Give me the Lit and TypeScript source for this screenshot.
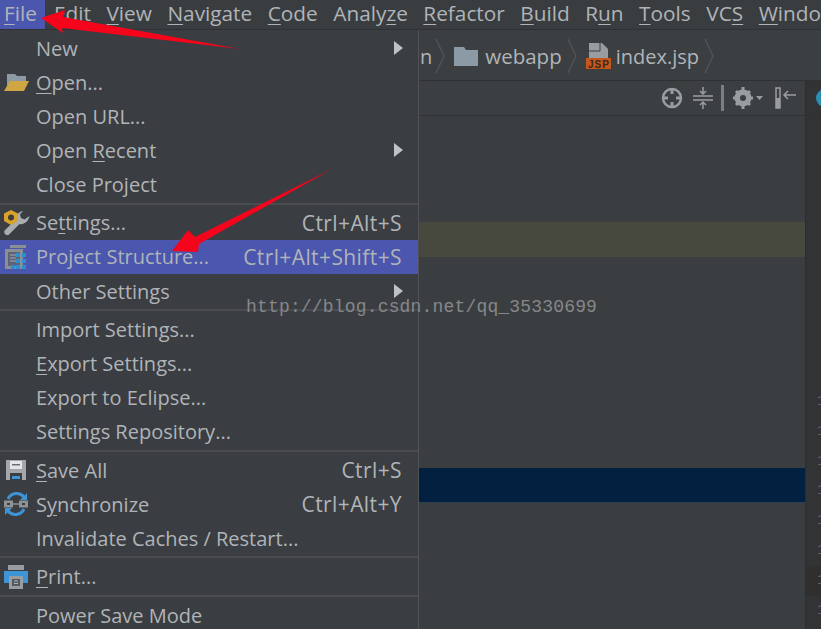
import { LitElement, html, css, svg } from "lit";
import { customElement } from "lit/decorators.js";

type Row = { t?: any; k?: string; sub?: boolean; hi?: boolean; ic?: any; sep?: boolean };

const folderOpen = html`<svg width="26" height="20" viewBox="0 0 26 20"><path d="M4 2h8l2 2h9v5H8l-4 8z" fill="#8c9aa6"/><path d="M7 9h19l-5 10H1z" fill="#d0a544"/></svg>`;
const wrench = html`<svg width="27" height="26" viewBox="0 0 27 26"><path d="M20 1c-4 .5-7 4-6.500 8L2 20c-2 2 0 6 3.500 5l11-11c4.500 1 9-2.500 10-8l-5 3.500-3.500-1.500-1-3.500z" fill="#a9acaf"/><path d="M8 0l7 3.500v7.500l-7 4-7-4V3.500z" fill="#d9a32b"/><circle cx="8" cy="7.500" r="3" fill="#3f3d36"/></svg>`;
const projIcon = html`<svg width="26" height="26" viewBox="0 0 26 26"><path d="M7 1h16v3H7zM2 5h18v20H2z" fill="#8b8f94"/><rect x="5" y="8" width="12" height="14" fill="#5f6377"/><path d="M7 11h6M7 14h6M7 17h6" stroke="#a3a6ad"/><g fill="#2d8fd0"><rect x="13" y="9" width="4" height="4"/><rect x="19" y="9" width="4" height="4"/><rect x="13" y="15" width="4" height="4"/><rect x="19" y="15" width="4" height="4"/><rect x="8" y="21" width="4" height="4"/><rect x="13" y="21" width="4" height="4"/><rect x="19" y="21" width="4" height="4"/></g></svg>`;
const save = html`<svg width="22" height="22" viewBox="0 0 22 22"><path d="M1 1h20v20H1z" fill="#a4a7aa"/><rect x="5" y="2" width="12" height="8" fill="#e4e5e6"/><rect x="7" y="5" width="8" height="1.500" fill="#6c6f72"/><rect x="5" y="14" width="12" height="7" fill="#3a3d41"/><rect x="7" y="17" width="8" height="3" fill="#3d94d6"/></svg>`;
const sync = html`<svg width="26" height="26" viewBox="0 0 26 26"><path d="M5 8a9.500 9.500 0 0 1 16-2" fill="none" stroke="#3d94d6" stroke-width="3"/><path d="M21 18a9.500 9.500 0 0 1-16 2" fill="none" stroke="#3d94d6" stroke-width="3"/><path d="M24 2v7h-7zM2 24v-7h7z" fill="#3d94d6"/><rect x="1" y="9.500" width="9" height="7" fill="#8f9295"/><rect x="16" y="9.500" width="9" height="7" fill="#8f9295"/><rect x="4" y="12" width="3" height="2" fill="#3a3d41"/><rect x="19" y="12" width="3" height="2" fill="#3a3d41"/><path d="M10 13h6" stroke="#8f9295" stroke-width="1.500"/></svg>`;
const print = html`<svg width="26" height="26" viewBox="0 0 26 26"><rect x="5" y="1" width="16" height="5" fill="#9a9da0"/><path d="M1 7h24v12H1z" fill="#3d94d6"/><rect x="6" y="12" width="14" height="13" fill="#9a9da0"/><rect x="9" y="15" width="8" height="7" fill="#55585c"/><path d="M11 17h4M11 19.500h4" stroke="#b5b7ba"/></svg>`;

const u = (s: string) => html`<span class="u">${s}</span>`;

const rows: Row[] = [
  { t: "New", sub: true },
  { t: html`${u("O")}pen...`, ic: folderOpen },
  { t: "Open URL..." },
  { t: html`Open ${u("R")}ecent`, sub: true },
  { t: "Close Project" },
  { sep: true },
  { t: html`Se${u("t")}tings...`, k: "Ctrl+Alt+S", ic: wrench },
  { t: "Project Structure...", k: "Ctrl+Alt+Shift+S", hi: true, ic: projIcon },
  { t: "Other Settings", sub: true },
  { sep: true },
  { t: "Import Settings..." },
  { t: html`${u("E")}xport Settings...` },
  { t: "Export to Eclipse..." },
  { t: "Settings Repository..." },
  { sep: true },
  { t: html`${u("S")}ave All`, k: "Ctrl+S", ic: save },
  { t: html`S${u("y")}nchronize`, k: "Ctrl+Alt+Y", ic: sync },
  { t: "Invalidate Caches / Restart..." },
  { sep: true },
  { t: html`${u("P")}rint...`, ic: print },
  { sep: true },
  { t: "Power Save Mode" },
];

const menus: [string, string, string][] = [
  ["", "F", "ile"], ["", "E", "dit"], ["", "V", "iew"], ["", "N", "avigate"], ["", "C", "ode"],
  ["Analy", "z", "e"], ["", "R", "efactor"], ["", "B", "uild"], ["R", "u", "n"], ["", "T", "ools"],
  ["VC", "S", ""], ["", "W", "indow"],
];

@customElement("app-root")
export class AppRoot extends LitElement {
  static styles = css`
    :host { display: block; width: 821px; height: 629px; }
    .app { position: relative; width: 821px; height: 629px; overflow: hidden; background: #3c3f41; color: #b0b4b8;
      font-family: "Open Sans", "Noto Sans", sans-serif; font-size: 20px; display: flex; flex-direction: column; }
    .u { text-decoration: underline; text-underline-offset: 3px; text-decoration-thickness: 1px; }
    .bar { height: 30px; flex: none; display: flex; background: #3a3d40; border-bottom: 1px solid #2f3133; white-space: nowrap; line-height: 27px; font-size: 20.800px; box-sizing: border-box; overflow: hidden; }
    .mi { margin-right: 15.500px; flex: none; }
    .mi.on { background: #4b56ae; width: 45px; box-sizing: border-box; padding-left: 4px; margin-right: 9px; }
    .crumbs { height: 51px; flex: none; border-bottom: 1px solid #2f3133; display: flex; align-items: center; padding: 2px 0 0 420px; box-sizing: border-box; }
    .crumb-name { flex: none; }
    .webapp { font-size: 20.500px; }
    .chev { flex: none; margin: 0 9px 0 5px; }
    .chev.first { margin-left: 3px; }
    .chev.last { margin-right: 8px; }
    .folder { flex: none; margin-right: 7px; }
    .jsp { flex: none; margin-right: 4px; }
    .main { flex: 1; display: flex; min-height: 0; }
    .editor { flex: 1; display: flex; flex-direction: column; min-width: 0; }
    .tools { height: 35px; flex: none; border-bottom: 1px solid #2f3133; box-sizing: border-box; display: flex; align-items: center; justify-content: flex-end; padding-right: 8px; }
    .tools svg { flex: none; }
    .t-cross { margin-right: 9px; }
    .t-coll { margin-right: 7px; }
    .t-div { margin-right: 9px; }
    .t-gear { margin-right: 12px; }
    .code { flex: 1; display: flex; flex-direction: column; background: #3b3e40; }
    .sp1 { height: 106px; flex: none; }
    .caret { height: 35px; flex: none; background: #48493e; }
    .sp2 { height: 211px; flex: none; }
    .sel { height: 35px; flex: none; background: #02203f; border-bottom: 1px solid #2c3f52; box-sizing: border-box; }
    .side { width: 16px; flex: none; background: #313335; border-left: 1px solid #2b2d2f; display: flex; flex-direction: column; box-sizing: border-box; overflow: hidden; }
    .tab { height: 35px; flex: none; border-bottom: 1px solid #2f3133; display: flex; align-items: center; padding-left: 10px; box-sizing: border-box; }
    .dot { width: 18px; height: 18px; border-radius: 50%; background: #2a8fb0; flex: none; }
    .gutter { padding-top: 271px; padding-left: 11px; display: flex; flex-direction: column; font: 15px/29.800px "Liberation Mono", monospace; color: #5f6265; }
    .gutter .cur { background: #302f2d; margin-left: -11px; padding-left: 11px; }
    .menu { position: absolute; left: 0; top: 30px; width: 419px; height: 606px; background: #3a3d41; border-right: 1px solid #505255; padding-top: 1px; box-sizing: border-box; display: flex; flex-direction: column; }
    .row { height: 34.100px; flex: none; display: flex; align-items: center; padding: 0 16px 0 36px; position: relative; white-space: nowrap; }
    .row.hi { background: #4b56ae; }
    .row .l { flex: 1; }
    .key { font-size: 21px; letter-spacing: 0.400px; }
    .ic { position: absolute; left: 2px; top: 0; bottom: 0; width: 28px; display: flex; align-items: center; justify-content: center; }
    .tri { width: 0; height: 0; border-left: 9px solid #bfc2c5; border-top: 7px solid transparent; border-bottom: 7px solid transparent; margin-right: -1px; }
    .sep { height: 4.300px; flex: none; display: flex; align-items: center; }
    .sep::before { content: ""; display: block; width: 100%; height: 2px; background: #4a4c50; }
    .arrows { position: absolute; left: 0; top: 0; pointer-events: none; }
    .wm { position: absolute; left: 246px; top: 295px; font: 18px/24px "Liberation Mono", monospace; color: #85888b; letter-spacing: 0.170px; white-space: nowrap; }
  `;

  render() {
    const chev = svg`<path d="M1 1l8 17-8 17" fill="none" stroke="#505356" stroke-width="1.500"/>`;
    return html`<div class="app">
      <div class="bar">
        ${menus.map(([a, b, c], i) => html`<div class="mi ${i === 0 ? "on" : ""}">${a}${u(b)}${c}</div>`)}
      </div>
      <div class="crumbs">
        <span class="crumb-name">n</span>
        <svg class="chev first" width="10" height="36">${chev}</svg>
        <svg width="24" height="20" viewBox="0 0 24 20" class="folder"><path d="M0 1h10l2 3h12v16H0z" fill="#8c9aa6"/></svg>
        <span class="crumb-name webapp">webapp</span>
        <svg class="chev" width="10" height="36">${chev}</svg>
        <svg width="26" height="28" viewBox="0 0 26 28" class="jsp"><path d="M3 1h13l6 6v11H3z" fill="#9a9da0"/><path d="M3 9h11v-8" stroke="#3c3f41" fill="none"/><rect x="0" y="16" width="25" height="11" fill="#c8561a"/><text x="2" y="25.500" font-size="10" font-family="Liberation Sans" font-weight="700" fill="#3a2a20" textLength="21">JSP</text></svg>
        <span class="crumb-name">index.jsp</span>
        <svg class="chev last" width="10" height="36">${chev}</svg>
      </div>
      <div class="main">
        <div class="editor">
          <div class="tools">
            <svg class="t-cross" width="22" height="22" viewBox="0 0 22 22"><circle cx="11" cy="11" r="9" fill="none" stroke="#9a9da0" stroke-width="2.500"/><path d="M11 1v6M11 15v6M1 11h6M15 11h6" stroke="#9a9da0" stroke-width="3"/></svg>
            <svg class="t-coll" width="22" height="24" viewBox="0 0 22 24"><path d="M1 10h20M1 14h20" stroke="#9a9da0" stroke-width="1.500"/><path d="M11 1v6M8 5l3 3 3-3M11 23v-6M8 19l3-3 3 3" stroke="#9a9da0" fill="none" stroke-width="1.500"/></svg>
            <svg class="t-div" width="3" height="26"><rect width="3" height="26" fill="#7c7f82"/></svg>
            <svg class="t-gear" width="30" height="22" viewBox="0 0 30 22"><circle cx="10" cy="11" r="6" fill="none" stroke="#9a9da0" stroke-width="5"/><path d="M10 0v22M0 11h20M3 4l14 14M17 4L3 18" stroke="#9a9da0" stroke-width="3"/><circle cx="10" cy="11" r="3" fill="#3c3f41"/><path d="M23 9h7l-3.500 4z" fill="#9a9da0"/></svg>
            <svg width="22" height="24" viewBox="0 0 22 24"><rect x="1" y="2" width="4" height="20" fill="none" stroke="#9a9da0" stroke-width="1.500"/><rect x="1" y="12" width="4" height="10" fill="#9a9da0"/><path d="M21 9H9M13 5l-4 4 4 4" fill="none" stroke="#9a9da0" stroke-width="1.500"/></svg>
          </div>
          <div class="code">
            <div class="sp1"></div><div class="caret"></div><div class="sp2"></div><div class="sel"></div>
          </div>
        </div>
        <div class="side">
          <div class="tab"><span class="dot"></span></div>
          <div class="gutter">${[0,1,2,3,4,5,6,7].map((i) => html`<span class=${i === 6 ? "cur" : ""}>1</span>`)}</div>
        </div>
      </div>
      <div class="menu">
        ${rows.map((r) => r.sep ? html`<div class="sep"></div>` : html`<div class="row ${r.hi ? "hi" : ""}">
          ${r.ic ? html`<span class="ic">${r.ic}</span>` : ""}
          <span class="l">${r.t}</span>
          ${r.k ? html`<span class="key">${r.k}</span>` : ""}
          ${r.sub ? html`<span class="tri"></span>` : ""}
        </div>`)}
      </div>
      <div class="wm">http://blog.csdn.net/qq_35330699</div>
      <svg class="arrows" width="821" height="629" viewBox="0 0 821 629">
        <path d="M41 18L65 10 63 17 240 49 62 28 63 33z" fill="#f5051c"/>
        <path d="M172 251L188 230 195 237 332 169 199 244 198 252z" fill="#f5051c"/>
      </svg>
    </div>`;
  }
}
